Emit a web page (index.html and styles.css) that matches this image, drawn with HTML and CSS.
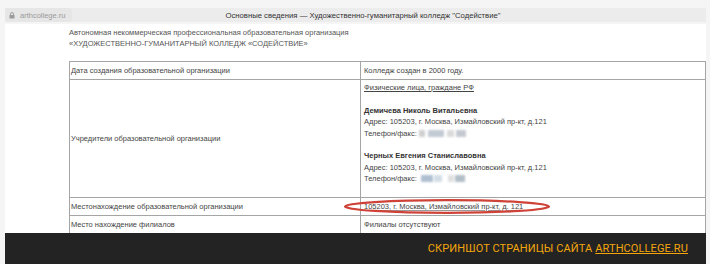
FILE: index.html
```html
<!DOCTYPE html>
<html lang="ru">
<head>
<meta charset="utf-8">
<title>Основные сведения</title>
<link rel="stylesheet" href="styles.css">
</head>
<body>
<div class="window">
  <div class="bar">
    <div class="pill">
      <svg class="lock" width="6" height="7" viewBox="0 0 6 7"><path d="M1.5 3V2a1.5 1.5 0 0 1 3 0v1" fill="none" stroke="#9a9a9a" stroke-width="0.9"/><rect x="0.5" y="3" width="5" height="3.6" rx="0.6" fill="#9a9a9a"/></svg>
      <span>arthcollege.ru</span>
    </div>
    <div class="title">Основные сведения — Художественно-гуманитарный колледж "Содействие"</div>
  </div>
  <div class="page">
    <div class="content">
      <div class="org">Автономная некоммерческая профессиональная образовательная организация<br>«ХУДОЖЕСТВЕННО-ГУМАНИТАРНЫЙ КОЛЛЕДЖ «СОДЕЙСТВИЕ»</div>
      <table class="info">
        <tr class="r1">
          <td class="k">Дата создания образовательной организации</td>
          <td class="v">Колледж создан в 2000 году.</td>
        </tr>
        <tr class="r2">
          <td class="k">Учредители образовательной организации</td>
          <td class="v founders">
            <a class="link">Физические лица, граждане РФ</a><br><br>
            <b>Демичева Николь Витальевна</b><br>
            Адрес: 105203, г. Москва, Измайловский пр-кт, д.121<br>
            Телефон/факс: <span class="blur b1"></span><span class="blur b2"></span><span class="blur b3"></span><span class="blur b4"></span><br><br>
            <b>Черных Евгения Станиславовна</b><br>
            Адрес: 105203, г. Москва, Измайловский пр-кт, д.121<br>
            Телефон/факс: <span class="blur c1"></span><span class="blur c2"></span><span class="blur c3"></span><span class="blur c4"></span>
          </td>
        </tr>
        <tr class="r3">
          <td class="k">Местонахождение образовательной организации</td>
          <td class="v addr"><span class="u">105203, г. Москва, Измайловский пр-кт, д. 121</span>
            <svg class="ellipse" width="208" height="17" viewBox="0 0 208 17"><ellipse cx="104" cy="8.5" rx="102" ry="6.3" fill="none" stroke="#cf4237" stroke-width="2.2"/></svg>
          </td>
        </tr>
        <tr class="r4">
          <td class="k">Место нахождение филиалов</td>
          <td class="v">Филиалы отсутствуют</td>
        </tr>
      </table>
    </div>
    <div class="banner">СКРИНШОТ СТРАНИЦЫ САЙТА <span class="site">ARTHCOLLEGE.RU</span></div>
  </div>
</div>
</body>
</html>
```
FILE: styles.css
```css
html, body {
  margin: 0;
  padding: 0;
}
body {
  background: #f5f5f5;
  font-family: "Liberation Sans", Arial, sans-serif;
  width: 710px;
  height: 264px;
  overflow: hidden;
}
.window {
  margin: 8px 4px 0 5px;
}
.bar {
  height: 14px;
  background: #ececec;
  display: flex;
  align-items: center;
}
.pill {
  display: flex;
  align-items: center;
  gap: 5px;
  height: 14px;
  width: 67px;
  box-sizing: border-box;
  padding-left: 4px;
  background: #e6e6e6;
  border-radius: 3px;
  font-size: 7.5px;
  color: #9a9a9a;
}
.lock {
  display: block;
}
.title {
  flex: 1;
  text-align: center;
  font-size: 7.7px;
  color: #333;
  padding-right: 52px;
}
.page {
  margin-top: 2px;
  background: #fff;
  height: 240px;
  position: relative;
  overflow: hidden;
}
.content {
  padding: 3px 0 0 64px;
}
.org {
  font-size: 7.5px;
  line-height: 11px;
  color: #555;
  margin-bottom: 12px;
}
.info {
  border-collapse: collapse;
  width: 637px;
  font-size: 7.5px;
  color: #444;
  border: 1px solid #a5a5a5;
}
.info td {
  border: 1px solid #a5a5a5;
  padding: 0;
  vertical-align: middle;
}
.info .k {
  width: 289px;
  padding-left: 1px;
}
.info .v {
  padding-left: 3px;
}
.r1 td, .r3 td, .r4 td {
  height: 17px;
}
.founders {
  line-height: 11.4px;
  padding-top: 2px !important;
  padding-bottom: 12px !important;
}
.founders b {
  color: #333;
}
.link {
  color: #444;
  text-decoration: underline;
}
.blur {
  display: inline-block;
  height: 7px;
  vertical-align: -1px;
  filter: blur(0.8px);
}
.b1 { width: 6px; background: #cfcfcf; }
.b2 { width: 16px; background: #c2cad4; margin-left: 3px; }
.b3 { width: 7px; background: #dadada; margin-left: 3px; }
.b4 { width: 10px; background: #c4c9d0; margin-left: 2px; }
.c1 { width: 12px; background: #aebfd0; margin-left: 2px; }
.c2 { width: 8px; background: #d3dde6; margin-left: 1px; }
.c3 { width: 6px; background: #e0e0e0; margin-left: 6px; }
.c4 { width: 10px; background: #b2bec7; margin-left: 1px; }
.addr {
  position: relative;
}
.u {
  text-decoration: underline;
  text-decoration-color: #999;
}
.ellipse {
  position: absolute;
  left: -18px;
  top: 0;
}
.banner {
  position: absolute;
  left: 0;
  right: -4px;
  bottom: 0;
  height: 31px;
  background: #232323;
  box-sizing: border-box;
  padding-right: 22px;
  display: flex;
  align-items: center;
  justify-content: flex-end;
  font-family: Roboto, "Liberation Sans", sans-serif;
  font-size: 11px;
  letter-spacing: 0.1px;
  color: #f3a60c;
}
.site {
  text-decoration: underline;
  margin-left: 3px;
}
```
